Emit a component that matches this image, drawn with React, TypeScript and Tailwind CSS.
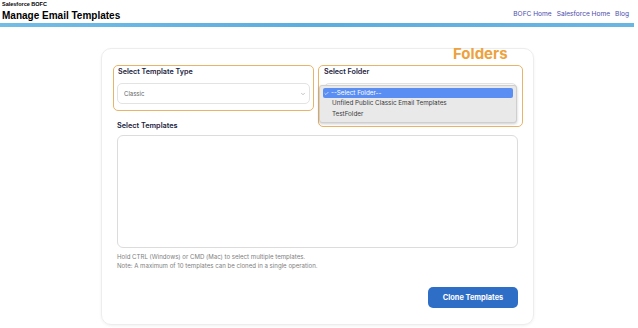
import { Check, ChevronDown } from 'lucide-react';

const folders = ['Unfiled Public Classic Email Templates', 'TestFolder'];

export default function App() {
    return (
        <div className="w-[638px] h-[328px] overflow-hidden bg-white font-['Inter',sans-serif] text-[#1c2340]">
            {/* Header */}
            <div className="flex items-end justify-between pl-[2px] pr-[9px] h-[23px]">
                <div className="font-['Liberation_Sans',Arial,sans-serif] font-bold leading-none">
                    <p className="text-[5.5px] text-black mb-[4px] -mt-[4px]">Salesforce BOFC</p>
                    <h1 className="text-[10px] text-black mb-[2px]">Manage Email Templates</h1>
                </div>
                <nav className="flex gap-[5px] text-[6.6px] text-[#4c4cab] mb-[3px]">
                    <a>BOFC Home</a>
                    <a>Salesforce Home</a>
                    <a>Blog</a>
                </nav>
            </div>
            <div className="h-[4px] w-[634px] bg-gradient-to-r from-[#72bde6] via-[#5aaee0] to-[#6ab6e3]" />

            {/* Card */}
            <div className="relative ml-[101px] mt-[21px] w-[433px] h-[277px] rounded-[10px] border border-[#ededed] shadow-[0_1px_3px_rgba(0,0,0,0.06)] px-[15px] pt-[16px]">
                <span className="absolute left-[351px] top-[-3px] text-[15px] font-bold text-[#eda23e] leading-none">Folders</span>

                <div className="flex gap-[4px] -ml-[4px] h-[46px] items-start">
                    {/* Template type */}
                    <div className="w-[201px] h-[46px] shrink-0 border border-[#e8b46a] rounded-[5px] px-[3px] pt-[1px]">
                        <p className="text-[7.2px] font-semibold leading-[10px] pl-[1px]">Select Template Type</p>
                        <div className="mt-[6px] h-[21px] flex items-center justify-between rounded-[5px] border border-[#e3e3e3] pl-[6px] pr-[3px] text-[6px] text-[#666]">
                            <span>Classic</span>
                            <ChevronDown size={6} strokeWidth={2} className="text-[#888]" />
                        </div>
                    </div>

                    {/* Folder */}
                    <div className="relative w-[205px] h-[62px] shrink-0 border border-[#e8b46a] rounded-[5px] px-[5px] pt-[1px]">
                        <p className="text-[7.2px] font-semibold leading-[10px]">Select Folder</p>
                        <div className="mt-[6px] h-[21px] rounded-[5px] border border-[#e3e3e3]" />
                        <div className="absolute left-[0px] top-[19px] w-[198px] h-[38px] rounded-[3px] border border-[#cfcfcf] bg-[#e9e9e9] shadow-[0_1px_3px_rgba(0,0,0,0.2)] px-[3px] pt-[2px] text-[6.3px] leading-[11px] text-[#3a3a3a]">
                            <div className="flex items-center h-[10px] rounded-[2px] bg-[#5b8ef2] text-white pl-[1px]">
                                <Check size={5} strokeWidth={3} className="mr-[2px]" />
                                <span>--Select Folder--</span>
                            </div>
                            {folders.map((f) => (
                                <div key={f} className="pl-[9px]">{f}</div>
                            ))}
                        </div>
                    </div>
                </div>

                <p className="mt-[10px] text-[7.3px] font-semibold leading-[10px]">Select Templates</p>
                <div className="mt-[4px] h-[113px] rounded-[6px] border border-[#dcdcdc]" />

                <div className="mt-[4px] text-[6.1px] leading-[9px] text-[#808080]">
                    <p>Hold CTRL (Windows) or CMD (Mac) to select multiple templates.</p>
                    <p>Note: A maximum of 10 templates can be cloned in a single operation.</p>
                </div>

                <div className="flex justify-end mt-[17px]">
                    <button className="w-[90px] h-[21px] rounded-[5px] bg-[#2f6ec7] text-white text-[7.4px] font-bold">
                        Clone Templates
                    </button>
                </div>
            </div>
        </div>
    );
}
